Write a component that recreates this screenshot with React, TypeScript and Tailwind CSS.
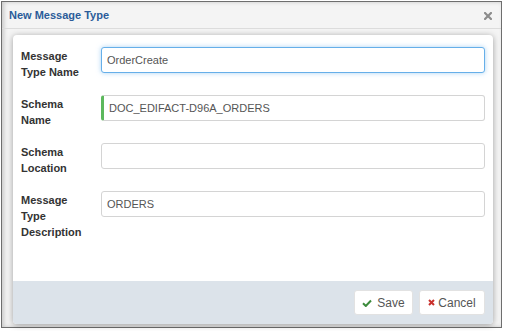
const fields = [
  { label: "Message Type Name", value: "OrderCreate", state: "focus" },
  { label: "Schema Name", value: "DOC_EDIFACT-D96A_ORDERS", state: "valid" },
  { label: "Schema Location", value: "", state: "" },
  { label: "Message Type Description", value: "ORDERS", state: "" },
];

function inputClass(state: string) {
  if (state === "focus")
    return "border-[#66afe9] shadow-[0_0_5px_rgba(102,175,233,0.55)]";
  if (state === "valid") return "border-[#d4d4d4] border-l-[3px] border-l-[#5cb85c] pl-[5px]";
  return "border-[#d4d4d4]";
}

export default function App() {
  return (
    <div className="h-[331px] w-[506px] bg-white pl-px pt-px font-[family-name:'Liberation_Sans',Arial,sans-serif]">
      <div className="flex h-[327px] w-[501px] flex-col border border-[#6e6e6e] bg-[#f4f4f4] shadow-[inset_2px_0_4px_rgba(0,0,0,0.18)]">
        {/* Header */}
        <div className="flex h-[27px] shrink-0 items-center justify-between border-b border-[#dcdcdc] pl-[7px] pr-[9px]">
          <span className="text-[11px] font-bold text-[#2b5c99]">
            New Message Type
          </span>
          <svg width="8" height="8" viewBox="0 0 8 8" className="mt-[1px]">
            <path
              d="M1 1L7 7M7 1L1 7"
              stroke="#8c8c8c"
              strokeWidth="2.2"
              strokeLinecap="square"
            />
          </svg>
        </div>

        {/* Body */}
        <div className="flex min-h-0 flex-1 pl-[11px] pr-[8px] pt-[6px] pb-[3px]">
          <div className="flex flex-1 flex-col rounded-[4px] bg-white shadow-[0_1px_6px_rgba(0,0,0,0.35)]">
            <div className="flex flex-col gap-[22px] px-[8px] pt-[12px]">
              {fields.map((f) => (
                <div key={f.label} className="flex h-[26px] gap-[10px]">
                  <label className="w-[70px] shrink-0 pt-px text-[11px] font-bold leading-[16px] text-[#333]">
                    {f.label}
                  </label>
                  <div
                    className={`flex h-[26px] flex-1 items-center rounded-[3px] border bg-white px-[5px] text-[11px] text-[#555] ${inputClass(
                      f.state
                    )}`}
                  >
                    {f.value}
                  </div>
                </div>
              ))}
            </div>

            {/* Footer */}
            <div className="mt-auto flex h-[43px] items-center justify-end gap-[6px] rounded-b-[4px] bg-[#dce3ea] pr-[8px]">
              <button className="flex h-[25px] w-[59px] items-center justify-center gap-[5px] rounded-[3px] border border-[#e2e2e2] bg-white text-[12px] text-[#555]">
                <svg width="10" height="8" viewBox="0 0 10 8">
                  <path
                    d="M1 4.2L3.8 7L9 1.5"
                    fill="none"
                    stroke="#3c8b3c"
                    strokeWidth="2"
                  />
                </svg>
                Save
              </button>
              <button className="flex h-[25px] w-[66px] items-center justify-center gap-[3px] rounded-[3px] border border-[#e2e2e2] bg-white text-[12px] text-[#555]">
                <svg width="7" height="7" viewBox="0 0 7 7">
                  <path
                    d="M1 1L6 6M6 1L1 6"
                    stroke="#c9302c"
                    strokeWidth="2"
                  />
                </svg>
                Cancel
              </button>
            </div>
          </div>
        </div>
      </div>
    </div>
  );
}
